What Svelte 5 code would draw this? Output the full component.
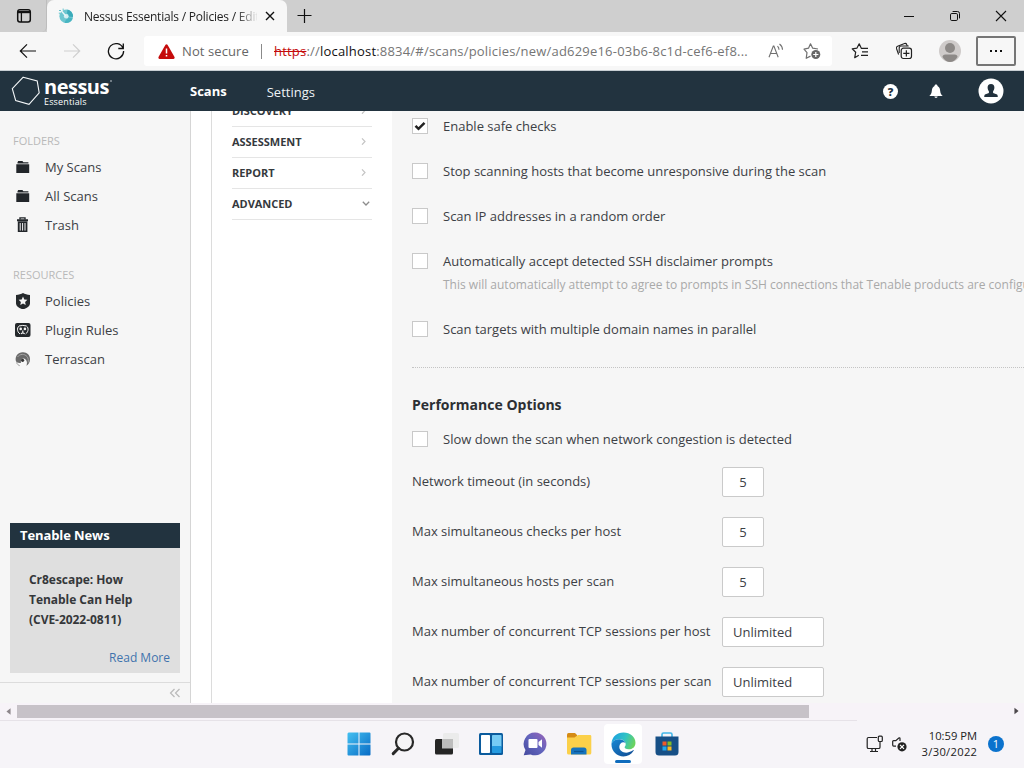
<script>
  const folders = [
    { name: 'My Scans', icon: 'folder' },
    { name: 'All Scans', icon: 'folder' },
    { name: 'Trash', icon: 'trash' }
  ];
  const resources = [
    { name: 'Policies', icon: 'shield' },
    { name: 'Plugin Rules', icon: 'plugin' },
    { name: 'Terrascan', icon: 'terrascan' }
  ];
  const sections = [
    { name: 'DISCOVERY', open: false },
    { name: 'ASSESSMENT', open: false },
    { name: 'REPORT', open: false },
    { name: 'ADVANCED', open: true }
  ];
  const checks = [
    { label: 'Enable safe checks', on: true },
    { label: 'Stop scanning hosts that become unresponsive during the scan' },
    { label: 'Scan IP addresses in a random order' },
    {
      label: 'Automatically accept detected SSH disclaimer prompts',
      hint: 'This will automatically attempt to agree to prompts in SSH connections that Tenable products are configured to scan'
    },
    { label: 'Scan targets with multiple domain names in parallel' }
  ];
  const fields = [
    { label: 'Network timeout (in seconds)', value: '5' },
    { label: 'Max simultaneous checks per host', value: '5' },
    { label: 'Max simultaneous hosts per scan', value: '5' },
    { label: 'Max number of concurrent TCP sessions per host', value: 'Unlimited', wide: true },
    { label: 'Max number of concurrent TCP sessions per scan', value: 'Unlimited', wide: true }
  ];
</script>

{#snippet sideIcon(kind)}
  <svg class="side-icon" viewBox="0 0 16 16" width="16" height="16">
    {#if kind === 'folder'}
      <path d="M2.500 3.300 3.200 2h4.200l1 1.200h5v1.300H2.500zM1.300 5.300h12.900V14H1.300z" fill="#22262a" />
    {:else if kind === 'trash'}
      <path d="M5 2.600V.9h5v1.700" fill="none" stroke="#22262a" stroke-width="1.400" />
      <path d="M2 2.200h11v2H2zM2.800 4.600h9.600V15H2.800z" fill="#22262a" />
      <path d="M5.200 6v7.600M7.600 6v7.600M10 6v7.600" stroke="#f5f5f5" stroke-width="1" />
    {:else if kind === 'shield'}
      <path d="M8 0c1.800 1.200 4.200 1.800 7 1.900v8.600c0 2.800-3.200 4.500-7 6-3.800-1.500-7-3.200-7-6V1.900C3.800 1.800 6.200 1.200 8 0z" fill="#25292c" />
      <path d="m8 3.600 1.300 2.800 3.100.4-2.300 2.100.6 3.100L8 10.500 5.300 12l.6-3.100-2.300-2.100 3.100-.4z" fill="#f5f5f5" />
    {:else if kind === 'plugin'}
      <rect x="0" y="1" width="15.500" height="14" rx="2" fill="#25292c" />
      <path d="M5.200 3.600C1.800 4.300 1.500 9.500 5 12M10.400 3.600c3.400.7 3.700 5.900.2 8.400M4.800 3.900q3-1 6 0" fill="none" stroke="#f5f5f5" stroke-width="1" />
      <circle cx="5.700" cy="6.900" r="1.300" fill="#f5f5f5" />
      <circle cx="9.900" cy="6.900" r="1.300" fill="#f5f5f5" />
      <path d="M7.800 8.500v1.800M6 12c.9-1.600 2.700-1.600 3.600 0" fill="none" stroke="#f5f5f5" stroke-width="1.200" />
    {:else}
      <path d="M.8 9.800C0 5 3 1.500 7.600 1.200c4.400-.2 7.500 2.800 7.400 7 0 3-1.700 5.400-3.600 6.500.9-2.300.8-4.800-.8-6.300-2.300-1.900-5.300-.2-4.700 3.500C3.500 12.200 1.300 11.600.8 9.800z" fill="#6a6a6a" />
      <path d="M2.500 6C5 2.600 9.500 2.600 12 5.500c1.300 1.600 1.700 4.200 1 6.200" fill="none" stroke="#a5a5a5" stroke-width="1" />
      <circle cx="7.600" cy="9.300" r="1.600" fill="#333" />
      <path d="M1.500 11.500c.6 1.600 1.700 2.600 3.200 3.200" fill="none" stroke="#9a9a9a" />
    {/if}
  </svg>
{/snippet}

<div class="screen">
  <div class="tabstrip">
    <div class="tab-actions">
      <svg viewBox="0 0 16 16" width="16" height="16"><rect x="1.700" y="1.700" width="12.600" height="12.300" rx="2.200" fill="none" stroke="#111" stroke-width="1.500" /><path d="M2 3h12v2.200H2z" fill="#111" /><path d="M5.400 5v9" stroke="#111" stroke-width="1.300" /></svg>
    </div>
    <div class="tab">
      <svg class="favicon" viewBox="0 0 16 16" width="16" height="16">
        <circle cx="8.200" cy="8.200" r="6.800" fill="#6cc6d0" />
        <path d="M9.500 1.500a6.800 6.800 0 0 1 5.400 7.500l-4-.6A3 3 0 0 0 9 5.500z" fill="#3aabba" />
        <path d="M14.700 10.500a6.800 6.800 0 0 1-8.200 4.300l1.600-3.400a3 3 0 0 0 2.600-1.900z" fill="#48b5c2" />
        <circle cx="8.200" cy="8.300" r="2.300" fill="#d3eef1" />
        <path d="M3.500 3 7.800 8" stroke="#e8f6f7" stroke-width="1.400" />
        <path d="M1 2.500h2M.8 5.200h1.600M4.500 1.200h1.400" stroke="#61c2cb" />
      </svg>
      <span class="tab-title">Nessus Essentials / Policies / Edit</span>
      <svg class="tab-close" viewBox="0 0 10 10" width="10" height="10"><path d="m1 1 8 8M9 1 1 9" stroke="#111" stroke-width="1.400" /></svg>
    </div>
    <svg class="new-tab" viewBox="0 0 16 16" width="16" height="16"><path d="M7.500 1v14M.5 7.500h14" stroke="#111" stroke-width="1.200" /></svg>
    <div class="window-buttons">
      <svg viewBox="0 0 12 12" width="12" height="12"><path d="M1 6.500h10" stroke="#111" /></svg>
      <svg viewBox="0 0 12 12" width="12" height="12"><rect x="1.500" y="3.500" width="7" height="7" rx="1.300" fill="none" stroke="#111" /><path d="M3.600 1.500h4.900a2 2 0 0 1 2 2v4.900" fill="none" stroke="#111" /></svg>
      <svg viewBox="0 0 12 12" width="12" height="12"><path d="m1 1 10 10M11 1 1 11" stroke="#111" stroke-width="1.100" /></svg>
    </div>
  </div>

  <div class="toolbar">
    <div class="nav-buttons">
      <svg viewBox="0 0 18 18" width="18" height="18"><path d="M17 9H1.500M8 2.300 1.300 9 8 15.700" fill="none" stroke="#111" stroke-width="1.200" /></svg>
      <svg viewBox="0 0 18 18" width="18" height="18"><path d="M1 9h15.500M10 2.300 16.700 9 10 15.700" fill="none" stroke="#cfcfcf" stroke-width="1.200" /></svg>
      <svg viewBox="0 0 18 18" width="18" height="18"><path d="M16 6.200A7.600 7.600 0 1 0 16.600 9M16.300 1.500v5h-5" fill="none" stroke="#111" stroke-width="1.300" /></svg>
    </div>
    <div class="address">
      <svg class="warn" viewBox="0 0 17 15" width="17" height="15"><path d="M7.500.8q1-1.300 2 0L16.500 13q.5 1.700-1 2h-14Q0 14.700.5 13z" fill="#c50b0b" /><path d="M8.500 4.500v5M8.500 11v1.600" stroke="#fff" stroke-width="1.500" /></svg>
      <span class="insecure">Not secure</span>
      <span class="divider"></span>
      <span class="url"><s>https</s><span>://</span><b>localhost</b><span>:8834/#/scans/policies/new/ad629e16-03b6-8c1d-cef6-ef8...</span></span>
      <svg class="read" viewBox="0 0 16 16" width="16" height="16"><path d="M1 14.300 5.300 3h.6L10.200 14.300M2.700 10.500h5.900M9.500 3.200c1 1 1.500 2.200 1.500 3.600M11.500 1c2 1.500 3 3.400 3 5.800" fill="none" stroke="#707070" stroke-width="1.100" /></svg>
      <svg class="fav-add" viewBox="0 0 18 18" width="18" height="18"><path d="M7.500 14.100 3.200 16.300 4 10.700 1 7.200 5.500 6.200 7.500 1.800 9.700 6.200 15 7" fill="none" stroke="#707070" stroke-width="1.200" stroke-linejoin="round" /><circle cx="12.800" cy="12.500" r="4.500" fill="#666" /><path d="M12.800 9.900v5.200M10.200 12.500h5.200" stroke="#fff" stroke-width="1.200" /></svg>
    </div>
    <div class="tools">
      <svg viewBox="0 0 18 18" width="18" height="18"><path d="M7.800 13.200 3.700 15.700 4.700 10.200 1.200 6.800 6 6.100 8.200 1.800 10.300 6.300H17M11 9.800h6M10 13.300h7" fill="none" stroke="#222" stroke-width="1.200" stroke-linejoin="round" /></svg>
      <svg viewBox="0 0 18 18" width="18" height="18"><path d="M3.600 12.500 1.500 6.500Q1.100 4.900 2.600 4.300L9.500 1.500q1.700-.4 2.200 1L12.300 4" fill="none" stroke="#222" stroke-width="1.100" /><path d="M4.200 11V6q0-2 2-2h7.500" fill="none" stroke="#222" stroke-width="1.100" /><rect x="6.200" y="6.200" width="10.300" height="10.300" rx="2.200" fill="#f7f7f7" stroke="#222" stroke-width="1.200" /><path d="M11.350 8.300v6.200M8.250 11.400h6.200" stroke="#222" stroke-width="1.200" /></svg>
      <svg class="profile" viewBox="0 0 22 22" width="22" height="22"><circle cx="11" cy="11" r="11" fill="#cfcbca" /><circle cx="11" cy="8" r="5" fill="#8d8987" /><path d="M3.500 17q0-2.500 3-2.500h9q3 0 3 2.500-3 5-7.500 5t-7.500-5z" fill="#8d8987" /></svg>
      <div class="more"><i></i><i></i><i></i></div>
    </div>
  </div>

  <header>
    <div class="brand">
      <svg viewBox="0 0 30 30" width="30" height="30"><path d="M12.200 1.200 26.200 5l2 11.800-10.200 11.500L4.700 24.600 1.300 12.700z" fill="none" stroke="#f5f8fa" stroke-width="1.100" /></svg>
      <div class="brand-text"><strong>nessus<i></i></strong><span>Essentials</span></div>
    </div>
    <nav><b>Scans</b><span>Settings</span></nav>
    <div class="header-icons">
      <span class="help">?</span>
      <svg class="bell" viewBox="0 0 14 15" width="14" height="15"><path d="M7 .5c1 0 1.500.7 1.500 1.400 2 1 2.500 2.800 2.700 5 .2 2 .9 3.500 2.500 5.100H.3C1.900 10.400 2.600 8.900 2.800 6.900c.2-2.200.7-4 2.700-5C5.500 1.200 6 .5 7 .5zM5.300 12.600h3.400Q8.400 14 7 14t-1.700-1.400z" fill="#fff" /></svg>
      <svg class="user" viewBox="0 0 26 26" width="26" height="26"><circle cx="13" cy="13" r="12.500" fill="#fff" /><path d="M13 6c2.300 0 3.500 1.500 3.400 3.800-.1 1.600-.6 2.600-1.300 3.500v1.600l4 1.600q.7.500.7 2.500H6.200q0-2 .7-2.500l4-1.600v-1.600c-.7-.9-1.200-1.900-1.300-3.500C9.500 7.500 10.700 6 13 6z" fill="#22313d" /></svg>
    </div>
  </header>

  <main>
    <aside>
      <h6>FOLDERS</h6>
      <ul>
        {#each folders as item}<li>{@render sideIcon(item.icon)}<span>{item.name}</span></li>{/each}
      </ul>
      <h6 class="second">RESOURCES</h6>
      <ul>
        {#each resources as item}<li>{@render sideIcon(item.icon)}<span>{item.name}</span></li>{/each}
      </ul>
      <div class="news">
        <h5>Tenable News</h5>
        <p>Cr8escape: How<br />Tenable Can Help<br />(CVE-2022-0811)</p>
        <span class="read-more">Read More</span>
      </div>
      <div class="collapse">
        <svg viewBox="0 0 12 10" width="12" height="10"><path d="M5.500 1 1.500 5l4 4M10.500 1l-4 4 4 4" fill="none" stroke="#b9b9b9" stroke-width="1.200" /></svg>
      </div>
    </aside>
    <div class="gutter"></div>
    <div class="sections">
      {#each sections as s}
        <div class="section">
          <span>{s.name}</span>
          {#if s.open}
            <svg viewBox="0 0 8 8" width="8" height="8"><path d="m.8 2.800 3.200 3.200 3.200-3.200" fill="none" stroke="#8c8c8c" stroke-width="1.300" /></svg>
          {:else}
            <svg class="closed" viewBox="0 0 8 8" width="8" height="8"><path d="M2 1.300 5 4.500 2 7.700" fill="none" stroke="#c4c4c4" stroke-width="1.200" /></svg>
          {/if}
        </div>
      {/each}
    </div>
    <div class="form">
      {#each checks as c}
        <div class="check">
          <span class="box">
            {#if c.on}<svg viewBox="0 0 12 10" width="12" height="10"><path d="m1.500 4.800 3 3 6-6" fill="none" stroke="#222" stroke-width="2.500" /></svg>{/if}
          </span>
          <div class="check-text"><span>{c.label}</span>{#if c.hint}<small>{c.hint}</small>{/if}</div>
        </div>
      {/each}
      <div class="rule"></div>
      <h4>Performance Options</h4>
      <div class="check slow">
        <span class="box"></span>
        <div class="check-text"><span>Slow down the scan when network congestion is detected</span></div>
      </div>
      {#each fields as f}
        <div class="field"><span>{f.label}</span><div class="input" class:wide={f.wide}>{f.value}</div></div>
      {/each}
    </div>
  </main>

  <div class="scrollbar">
    <svg viewBox="0 0 6 8" width="5" height="7"><path d="M5.500 0v8L.5 4z" fill="#8d868b" /></svg>
    <div class="thumb"></div>
    <svg viewBox="0 0 6 8" width="5" height="8"><path d="M.5 0v8l5-4z" fill="#4d484c" /></svg>
  </div>

  <footer>
    <div class="apps">
      <div class="app">
        <svg viewBox="0 0 24 24" width="24" height="24">
          <defs><linearGradient id="win" x1="0" y1="0" x2="24" y2="24" gradientUnits="userSpaceOnUse"><stop offset="0" stop-color="#45c2f2" /><stop offset="1" stop-color="#0669c4" /></linearGradient></defs>
          <path d="M1.500.5H11.500v11H.5v-10zM12.500.5h10q1 0 1 1v10h-11zM.5 12.500h11v11h-10q-1 0-1-1zM12.500 12.500h11v10q0 1-1 1h-10z" fill="url(#win)" />
        </svg>
      </div>
      <div class="app">
        <svg viewBox="0 0 24 24" width="24" height="24"><circle cx="13.500" cy="10" r="8.500" fill="#f5f4f6" stroke="#282828" stroke-width="2.200" /><path d="m7.500 16.300-5.300 5.300" stroke="#282828" stroke-width="3" stroke-linecap="round" /></svg>
      </div>
      <div class="app">
        <svg viewBox="0 0 24 24" width="24" height="24">
          <rect x="8" y="1" width="16" height="15" rx="1.500" fill="#ebebeb" />
          <rect x="0" y="7" width="18" height="15.500" rx="1.500" fill="#252525" />
          <path d="M7 7h11v9.500H7z" fill="#bdbdbd" />
        </svg>
      </div>
      <div class="app">
        <svg viewBox="0 0 24 24" width="24" height="24">
          <rect x="0" y="1" width="24" height="22" rx="1.500" fill="#0b5b9d" />
          <rect x="2" y="3" width="9" height="18" rx=".8" fill="#fff" />
          <rect x="13" y="3" width="9.500" height="12" rx=".8" fill="#77ccf5" />
          <rect x="13" y="14" width="9.500" height="7" rx=".8" fill="#269be0" />
        </svg>
      </div>
      <div class="app">
        <svg viewBox="0 0 24 24" width="24" height="24">
          <defs><linearGradient id="chat" x1="1" y1="0" x2="0" y2="1"><stop offset="0" stop-color="#9a63b8" /><stop offset=".5" stop-color="#6264bd" /><stop offset="1" stop-color="#454a9e" /></linearGradient></defs>
          <path d="M12.200.5a11.400 11.400 0 1 1-4.600 21.900L.7 23.300l1.800-5.200A11.400 11.400 0 0 1 12.200.5z" fill="url(#chat)" />
          <rect x="5.500" y="7" width="9" height="9" rx="1" fill="#fff" /><path d="m15.500 10 3.500-2.700v8.400L15.500 13z" fill="#fff" />
        </svg>
      </div>
      <div class="app">
        <svg viewBox="0 0 26 24" width="26" height="24">
          <path d="M1 2.500Q1 1 2.500 1H9l2 2v4H1z" fill="#d58b16" />
          <path d="M1 5.500h7.500L12 3h12q1.300 0 1.300 1.300V21q0 1.500-1.500 1.500h-21Q1 22.500 1 21z" fill="#fbd04a" />
          <path d="M5 22.500V18q0-2.500 2.500-2.500H18q2.500 0 2.500 2.500v4.500z" fill="#1673bd" /><path d="M8 19.500h9.500" stroke="#0b5594" stroke-width="1.200" />
        </svg>
      </div>
      <div class="app active">
        <svg viewBox="0 0 24 24" width="25" height="25">
          <defs>
            <linearGradient id="edgeA" x1="0" y1=".2" x2="1" y2=".5"><stop offset="0" stop-color="#1d9fe2" /><stop offset=".55" stop-color="#30c3c4" /><stop offset="1" stop-color="#6bd35d" /></linearGradient>
            <linearGradient id="edgeB" x1="0" y1="0" x2="1" y2="1"><stop offset="0" stop-color="#1788d5" /><stop offset="1" stop-color="#114a91" /></linearGradient>
          </defs>
          <path d="M.5 11C1 4.700 5.500.5 12 .5c6.500 0 11.500 4.300 11.500 9.700 0 4.100-3 6.300-6.500 6.300-2.900 0-4.200-1-3.900-2 .3-.7 1-1.400 1-2.800C14.100 9 11.500 7 8 7 4.500 7 2 8.300.5 11z" fill="url(#edgeA)" />
          <path d="M.5 11C2 8.300 4.500 7 8 7c2.600 0 5 1.200 5.900 3.300C11 8.800 8.300 10.500 8 14c-.3 4.300 4.800 7 9.500 5.300 1.500-.5 2.700-1.300 3.700-1.900.4-.2.800.1.500.6C19.500 21.400 16 23.500 12 23.500 5.500 23.500-.1 17.800.5 11z" fill="url(#edgeB)" />
        </svg>
      </div>
      <div class="app">
        <svg viewBox="0 0 24 24" width="24" height="24">
          <path d="M7 6V2.500q0-1.500 1.500-1.500h7Q17 1 17 2.500V6" fill="none" stroke="#42b5e8" stroke-width="1.600" />
          <path d="M.5 4.500h23V20q0 3.500-3.500 3.500H4Q.5 23.500.5 20z" fill="#174f86" />
          <path d="M7.500 9.500h4v4h-4z" fill="#f05a28" /><path d="M12.500 9.500h4v4h-4z" fill="#83bd26" /><path d="M7.500 14.500h4v4h-4z" fill="#22a8ec" /><path d="M12.500 14.500h4v4h-4z" fill="#fdba20" />
        </svg>
      </div>
    </div>
    <div class="tray">
      <svg viewBox="0 0 18 18" width="18" height="18"><path d="M11 2.500H2.500Q1.200 2.500 1.200 3.800v8.400q0 1.300 1.300 1.300h10.200q1.300 0 1.300-1.300V6.500M6 13.500v3M9.500 13.500v3M4 16.500h8" fill="none" stroke="#222" stroke-width="1.200" /><rect x="12.300" y="1.200" width="4" height="5.300" rx="1" fill="none" stroke="#222" stroke-width="1.200" /></svg>
      <svg viewBox="0 0 18 18" width="18" height="18"><path d="M9 6V3.500q-.2-1-1.200-.4L4.800 5.600H2.600q-.9 0-.9 1v3.500q0 1 .9 1h2.400" fill="none" stroke="#222" stroke-width="1.200" /><circle cx="11" cy="11.800" r="4.600" fill="#222" /><path d="m9 9.800 4 4M13 9.800l-4 4" stroke="#fff" stroke-width="1.200" /></svg>
      <div class="clock"><span>10:59 PM</span><span class="date">3/30/2022</span></div>
      <span class="badge">1</span>
    </div>
  </footer>
</div>

<style>
  :global(body) { margin: 0; overflow: hidden; }
  * { box-sizing: border-box; }
  svg { display: block; flex: none; }
  .screen { width: 1024px; height: 768px; overflow: hidden; display: flex; flex-direction: column; font-family: "Open Sans", sans-serif; font-size: 13px; color: #3c4045; background: #fff; white-space: nowrap; }

  .tabstrip { height: 32px; flex: none; display: flex; align-items: center; background: #cfcfcf; font-size: 12px; color: #222; }
  .tab-actions { width: 47px; height: 32px; padding: 8px 0 0 16px; border-bottom-right-radius: 5px; border-right: 1px solid #bdbdbd; }
  .tab { width: 240px; height: 32px; display: flex; align-items: center; background: #f7f7f7; border-radius: 7px 7px 0 0; padding-left: 11px; }
  .tab-title { width: 173px; margin-left: 10px; overflow: hidden; letter-spacing: -.21px; -webkit-mask-image: linear-gradient(90deg, #000 88%, transparent 101%); mask-image: linear-gradient(90deg, #000 88%, transparent 101%); }
  .tab-close { margin-left: 8px; }
  .new-tab { margin-left: 10px; }
  .window-buttons { margin-left: auto; display: flex; gap: 34px; padding-right: 17px; }

  .toolbar { height: 39px; flex: none; display: flex; align-items: center; background: #f7f7f7; border-bottom: 1px solid #c8ced3; }
  .nav-buttons { display: flex; gap: 26px; padding-left: 19px; width: 144px; }
  .address { width: 688px; height: 30px; display: flex; align-items: center; background: #fff; border-radius: 3px; font-size: 13px; }
  .warn { margin-left: 14px; }
  .insecure { width: 68px; margin-left: 7px; color: #666; letter-spacing: .1px; }
  .divider { width: 1px; height: 15px; margin: 0 12px 0 11px; background: #8a8a8a; }
  .url { width: 476px; color: #757575; letter-spacing: .2px; }
  .url s { color: #c50b0b; }
  .url b { font-weight: 400; color: #111; }
  .read { margin-left: 18px; }
  .fav-add { margin-left: 19px; }
  .tools { flex: 1; display: flex; align-items: center; padding-left: 19px; gap: 26px; }
  .more { width: 40px; height: 30px; margin-left: -11px; border: 2px solid #767676; border-radius: 2px; display: flex; align-items: center; justify-content: center; gap: 3px; }
  .more i { width: 2px; height: 2px; background: #111; }

  header { height: 40px; flex: none; display: flex; align-items: center; background: #22333f; color: #fff; }
  .brand { width: 190px; padding-left: 11px; display: flex; }
  .brand-text { display: flex; flex-direction: column; margin-left: 3px; padding-top: 1px; }
  .brand-text strong { display: flex; font-size: 20px; font-weight: 700; line-height: 20px; letter-spacing: -.5px; }
  .brand-text i { width: 2px; height: 2px; margin: 3px 0 0 1px; border-radius: 50%; background: #8c979f; }
  .brand-text span { font-size: 9px; line-height: 11px; margin-top: -1px; letter-spacing: .15px; }
  nav { display: flex; gap: 40px; align-items: center; }
  nav b { font-size: 13px; padding-bottom: 1px; }
  nav span { font-size: 13px; padding-top: 2px; color: #eef2f5; }
  .header-icons { margin-left: auto; display: flex; align-items: center; padding-right: 20px; }
  .help { width: 15px; height: 15px; border-radius: 50%; background: #fff; color: #22333f; font-size: 11px; line-height: 15px; font-weight: 800; text-align: center; }
  .bell { margin-left: 31px; }
  .user { margin-left: 35px; }

  main { height: 592px; flex: none; display: flex; overflow: hidden; }
  aside { width: 191px; flex: none; border-right: 1px solid #d5d5d5; background: #f6f6f6; display: flex; flex-direction: column; padding-top: 22px; }
  h6 { margin: 0 0 0 13px; font-size: 11px; line-height: 16px; font-weight: 400; color: #b9b9b9; }
  h6.second { margin-top: 28px; }
  ul { list-style: none; margin: 3px 0 0; padding: 0; }
  li { height: 29px; display: flex; align-items: center; padding-left: 15px; }
  li span { margin-left: 14px; }
  .news { margin: auto 10px 9px; height: 150px; background: #dfdfdf; display: flex; flex-direction: column; }
  h5 { margin: 0; height: 25px; line-height: 24px; padding-left: 10px; background: #22333f; color: #fff; font-size: 13px; font-weight: 700; letter-spacing: -.1px; }
  .news p { margin: 22px 0 0 19px; font-size: 12px; line-height: 20px; font-weight: 700; letter-spacing: -.04px; color: #35373a; }
  .read-more { align-self: flex-end; margin: 18px 10px 0 0; line-height: 20px; font-size: 12px; color: #3f73ad; }
  .collapse { height: 21px; flex: none; border-top: 1px solid #dcdcdc; display: flex; align-items: center; justify-content: flex-end; padding-right: 9px; }
  .gutter { width: 20px; flex: none; background: #fff; }
  .sections { width: 181px; flex: none; border-left: 1px solid #dcdcdc; background: #fff; padding: 0 20px; }
  .section { height: 31px; border-bottom: 1px solid #e5e5e5; display: flex; align-items: center; justify-content: space-between; font-size: 11px; font-weight: 700; letter-spacing: -.03px; color: #35393d; padding: 0 2px 2px 0; }
  .section:first-child { margin-top: -15px; }
  .closed { margin-right: 2px; }
  .form { flex: 1; min-width: 0; overflow: hidden; background: #f6f6f6; padding: 5px 0 0 20px; }
  .check { display: flex; align-items: flex-start; margin-bottom: 25px; }
  .check-text { margin-left: 15px; display: flex; flex-direction: column; line-height: 20px; }
  .check-text small { font-size: 12px; line-height: 20px; margin: 4px 0 -1px; color: #a9a9a9; }
  .box { width: 16px; height: 16px; flex: none; margin-top: 2px; border: 1px solid #c9c9c9; background: #fff; display: flex; align-items: center; justify-content: center; }
  .rule { border-top: 1px dotted #c4c4c4; margin-top: 28px; }
  h4 { margin: 27px 0 14px; font-size: 14px; line-height: 20px; font-weight: 700; color: #2c2f33; }
  .slow { margin-bottom: 18px; }
  .field { display: flex; height: 30px; margin-bottom: 20px; }
  .field > span { width: 310px; line-height: 28px; }
  .input { width: 42px; height: 30px; line-height: 28px; border: 1px solid #cacaca; border-radius: 2px; background: #fff; text-align: center; }
  .input.wide { width: 102px; text-align: left; padding-left: 10px; }

  .scrollbar { height: 17px; flex: none; display: flex; align-items: center; background: #f7f3f8; padding: 0 5px 1px 6px; }
  .thumb { width: 792px; height: 13px; margin: 0 auto 0 6px; background: #c7c2c8; }
  footer { height: 48px; flex: none; display: flex; align-items: center; background: linear-gradient(#e6e2e8, #e6e2e8) 0 0 / 857px 1px no-repeat #f6f4f8; }
  .apps { margin-left: 340px; display: flex; gap: 6px; width: 345px; }
  .app { width: 38px; height: 40px; flex: none; display: flex; align-items: center; justify-content: center; position: relative; }
  .active { background: #fff; border-radius: 4px; }
  .active::after { content: ""; position: absolute; bottom: 1px; left: 11px; width: 16px; height: 3px; border-radius: 2px; background: #0f6cbd; }
  .tray { display: flex; align-items: center; margin-left: auto; padding-right: 20px; color: #222; }
  .tray svg + svg { margin-left: 7px; }
  .clock { width: 68px; display: flex; flex-direction: column; align-items: flex-end; font-size: 11.200px; line-height: 16px; }
  .date { letter-spacing: .3px; margin-right: -.3px; }
  .badge { width: 16px; height: 16px; margin-left: 11px; border-radius: 50%; background: #0b72cd; color: #fff; text-align: center; font-size: 11px; line-height: 16px; }
</style>
